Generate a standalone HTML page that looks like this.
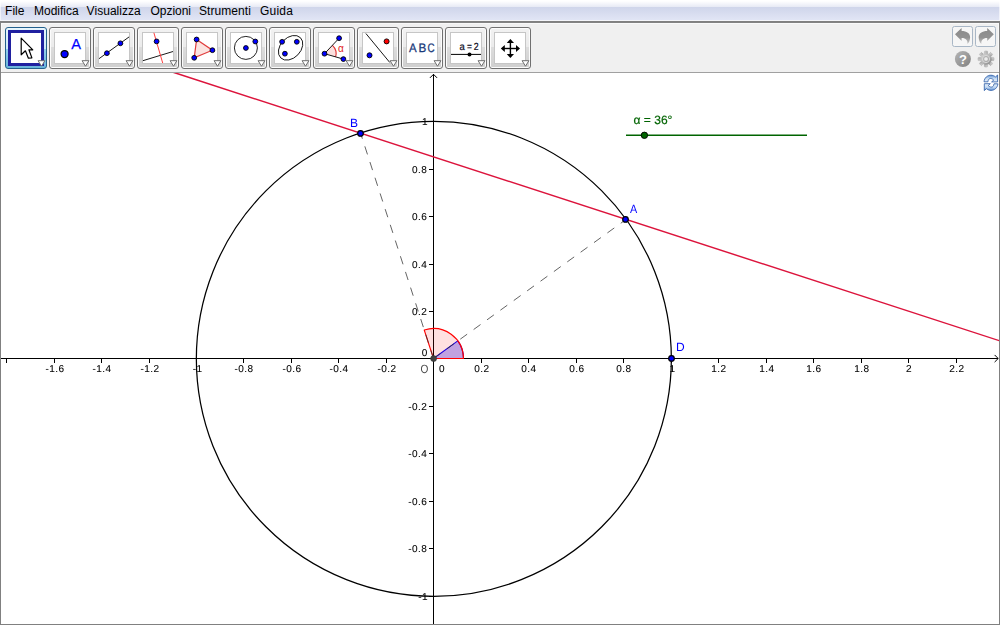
<!DOCTYPE html><html><head><meta charset="utf-8"><title>GeoGebra</title><style>
html,body{margin:0;padding:0;}
body{width:1000px;height:625px;overflow:hidden;position:relative;background:#fff;font-family:"Liberation Sans",Arial,sans-serif;}
#menubar{position:absolute;left:0;top:0;width:1000px;height:21px;
 background:linear-gradient(to bottom,#ffffff 0px,#ffffff 1px,#e7eaf5 7px,#cfd5ea 7px,#e1e5f5 20px,#f4f5fa 20px,#f4f5fa 21px);}
#menubar:before,#menubar:after{content:'';position:absolute;top:0;width:1px;height:20px;background:rgba(255,255,255,0.6);}
#menubar:before{left:0;}#menubar:after{right:0;}
#menubar span{position:absolute;top:4px;font-size:12px;line-height:15px;color:#000;white-space:nowrap;}
#toolbar{position:absolute;left:0;top:21px;width:1000px;height:52px;background:#f0f0f0;box-sizing:border-box;border-top:2px solid #838383;border-bottom:1px solid #a0a0a0;box-shadow:inset 2px 1px 0 0 #f9f9f9, inset -2px 0 0 0 #f9f9f9;}
#frame{position:absolute;left:0;top:21px;width:1000px;height:604px;box-sizing:border-box;border:1px solid #808080;pointer-events:none;}
.tb{position:absolute;top:4px;width:42px;height:42px;box-sizing:border-box;border:1px solid #707070;border-radius:3px;
 background:linear-gradient(to bottom,#f2f2f2 0,#ebebeb 19px,#dddddd 19px,#cfcfcf 40px);box-shadow:inset 0 0 0 1px #fcfcfc;}
.tb .ic{position:absolute;left:4px;top:4px;width:32px;height:32px;box-sizing:border-box;background:#fff;border:1px solid #c6c6c6;}
.tb.sel{border-color:#24608c;background:linear-gradient(to bottom,#e6f5fc 0,#cde9f7 21px,#94ceeb 21px,#68b3db 40px);box-shadow:inset 0 1px 0 0 #eaf7fd;}
.tb.sel .ic{left:2px;top:2px;width:36px;height:36px;border:3px solid #2020a0;}
.tb svg.ico{position:absolute;left:4px;top:4px;width:32px;height:32px;overflow:visible;}
.tb svg.dd{position:absolute;left:32px;top:32px;width:9px;height:7px;overflow:visible;}
.ur{position:absolute;top:3px;width:21px;height:21px;box-sizing:border-box;border:1px solid #a9b7c6;border-radius:2.5px;background:#f6f6f6;}
</style></head><body>
<div id="menubar">
<span style="left:5px;letter-spacing:0.05px">File</span>
<span style="left:34px;letter-spacing:0px">Modifica</span>
<span style="left:86.6px;letter-spacing:0.04px">Visualizza</span>
<span style="left:150.5px;letter-spacing:-0.04px">Opzioni</span>
<span style="left:199px;letter-spacing:0.07px">Strumenti</span>
<span style="left:260px;letter-spacing:0.2px">Guida</span>
</div>
<svg id="cv" width="1000" height="625" viewBox="0 0 1000 625" style="position:absolute;left:0;top:0;will-change:transform;text-rendering:geometricPrecision">
<g stroke="#000" stroke-width="1" fill="none" shape-rendering="crispEdges">
<line x1="1" y1="358.5" x2="998" y2="358.5"/>
<line x1="433.5" y1="74" x2="433.5" y2="624"/>
<line x1="6.5" y1="358.5" x2="6.5" y2="362.5"/>
<line x1="54.5" y1="358.5" x2="54.5" y2="362.5"/>
<line x1="101.5" y1="358.5" x2="101.5" y2="362.5"/>
<line x1="149.5" y1="358.5" x2="149.5" y2="362.5"/>
<line x1="196.5" y1="358.5" x2="196.5" y2="362.5"/>
<line x1="243.5" y1="358.5" x2="243.5" y2="362.5"/>
<line x1="291.5" y1="358.5" x2="291.5" y2="362.5"/>
<line x1="338.5" y1="358.5" x2="338.5" y2="362.5"/>
<line x1="386.5" y1="358.5" x2="386.5" y2="362.5"/>
<line x1="481.5" y1="358.5" x2="481.5" y2="362.5"/>
<line x1="528.5" y1="358.5" x2="528.5" y2="362.5"/>
<line x1="576.5" y1="358.5" x2="576.5" y2="362.5"/>
<line x1="623.5" y1="358.5" x2="623.5" y2="362.5"/>
<line x1="671.5" y1="358.5" x2="671.5" y2="362.5"/>
<line x1="718.5" y1="358.5" x2="718.5" y2="362.5"/>
<line x1="766.5" y1="358.5" x2="766.5" y2="362.5"/>
<line x1="813.5" y1="358.5" x2="813.5" y2="362.5"/>
<line x1="861.5" y1="358.5" x2="861.5" y2="362.5"/>
<line x1="908.5" y1="358.5" x2="908.5" y2="362.5"/>
<line x1="956.5" y1="358.5" x2="956.5" y2="362.5"/>
<line x1="429.0" y1="121.5" x2="433.5" y2="121.5"/>
<line x1="429.0" y1="169.5" x2="433.5" y2="169.5"/>
<line x1="429.0" y1="216.5" x2="433.5" y2="216.5"/>
<line x1="429.0" y1="264.5" x2="433.5" y2="264.5"/>
<line x1="429.0" y1="311.5" x2="433.5" y2="311.5"/>
<line x1="429.0" y1="406.5" x2="433.5" y2="406.5"/>
<line x1="429.0" y1="453.5" x2="433.5" y2="453.5"/>
<line x1="429.0" y1="501.5" x2="433.5" y2="501.5"/>
<line x1="429.0" y1="548.5" x2="433.5" y2="548.5"/>
<line x1="429.0" y1="596.5" x2="433.5" y2="596.5"/>
</g>
<g stroke="#000" stroke-width="1" fill="none" stroke-linecap="round">
<polyline points="430.2,77.6 433.5,74.3 436.8,77.6"/>
<polyline points="994.9,355.2 998.2,358.5 994.9,361.8"/>
</g>
<g font-family="Liberation Sans, Arial, sans-serif" font-size="10px" fill="#000" stroke="#000" stroke-width="0.1" letter-spacing="0.45">
<text x="54.9" y="371.9" text-anchor="middle">-1.6</text>
<text x="101.9" y="371.9" text-anchor="middle">-1.4</text>
<text x="149.9" y="371.9" text-anchor="middle">-1.2</text>
<text x="197.6" y="371.9" text-anchor="middle">-1</text>
<text x="243.9" y="371.9" text-anchor="middle">-0.8</text>
<text x="291.9" y="371.9" text-anchor="middle">-0.6</text>
<text x="338.9" y="371.9" text-anchor="middle">-0.4</text>
<text x="386.9" y="371.9" text-anchor="middle">-0.2</text>
<text x="481.9" y="371.9" text-anchor="middle">0.2</text>
<text x="528.9" y="371.9" text-anchor="middle">0.4</text>
<text x="576.9" y="371.9" text-anchor="middle">0.6</text>
<text x="623.9" y="371.9" text-anchor="middle">0.8</text>
<text x="672.6" y="371.9" text-anchor="middle">1</text>
<text x="718.9" y="371.9" text-anchor="middle">1.2</text>
<text x="766.9" y="371.9" text-anchor="middle">1.4</text>
<text x="813.9" y="371.9" text-anchor="middle">1.6</text>
<text x="861.9" y="371.9" text-anchor="middle">1.8</text>
<text x="908.9" y="371.9" text-anchor="middle">2</text>
<text x="956.9" y="371.9" text-anchor="middle">2.2</text>
<text x="428.0" y="125.0" text-anchor="end">1</text>
<text x="427.2" y="173.1" text-anchor="end">0.8</text>
<text x="427.2" y="220.1" text-anchor="end">0.6</text>
<text x="427.2" y="268.1" text-anchor="end">0.4</text>
<text x="427.2" y="315.1" text-anchor="end">0.2</text>
<text x="427.2" y="410.1" text-anchor="end">-0.2</text>
<text x="427.2" y="457.1" text-anchor="end">-0.4</text>
<text x="427.2" y="505.1" text-anchor="end">-0.6</text>
<text x="427.2" y="552.0" text-anchor="end">-0.8</text>
<text x="428.0" y="600.0" text-anchor="end">-1</text>
<text x="439.0" y="371.9">0</text>
<text x="421.8" y="355.9">0</text>
</g>
<text transform="translate(420.6,372.9) scale(0.84,1)" font-family="Liberation Sans, Arial, sans-serif" font-size="12px" fill="#484848">O</text>
<circle cx="433.85" cy="358.85" r="237.50" fill="none" stroke="#000" stroke-width="1.25"/>
<path d="M433.5,358.5 L463.5,358.5 A30,30 0 0 0 457.77,340.87 Z" fill="rgba(0,0,255,0.28)" stroke="#0000ff" stroke-width="1.1" stroke-linejoin="round"/>
<path d="M433.5,358.5 L463.5,358.5 A30,30 0 0 0 424.23,329.97 Z" fill="rgba(255,0,0,0.12)" stroke="#ff0000" stroke-width="1.1" stroke-linejoin="round"/>
<g stroke="#303030" stroke-width="0.75" stroke-dasharray="8.5 8" fill="none">
<line x1="433.5" y1="358.5" x2="626.1" y2="219.4"/>
<line x1="433.5" y1="358.5" x2="360.6" y2="133.2"/>
</g>
<line x1="166.2" y1="70" x2="1000" y2="340.9" stroke="#dc143c" stroke-width="1.45"/>
<circle cx="433.6" cy="358.6" r="3" fill="#404040" stroke="#303030" stroke-width="0.6"/>
<circle cx="625.5" cy="219.4" r="2.8" fill="#0000ff" stroke="#000" stroke-width="1.2"/>
<circle cx="360.5" cy="133.4" r="2.8" fill="#0000ff" stroke="#000" stroke-width="1.2"/>
<circle cx="671.5" cy="358.4" r="2.8" fill="#0000ff" stroke="#000" stroke-width="1.2"/>
<g font-family="Liberation Sans, Arial, sans-serif" font-size="12px" fill="#0000ff">
<text transform="translate(630,212.9) scale(0.9,1)">A</text>
<text x="350" y="127.2">B</text>
<text x="676.1" y="350.5">D</text>
</g>
<line x1="626" y1="135.3" x2="807" y2="135.3" stroke="#006400" stroke-width="1.6"/>
<circle cx="644.4" cy="135.3" r="3.2" fill="#006400" stroke="#000" stroke-width="0.9"/>
<text x="633.6" y="124" font-family="Liberation Sans, Arial, sans-serif" font-size="12px" fill="#006400" stroke="#006400" stroke-width="0.2">α = 36°</text>
</svg>
<div id="toolbar">
<div class="tb sel" style="left:5px"><div class="ic"></div><svg class="ico" viewBox="0 0 32 32"><path d="M11.2,6.2 L11.2,22.8 L15.4,18.8 L18.4,26.2 L21.9,25.9 L18.9,17.8 L22.8,17.8 Z" fill="#fff" stroke="#000" stroke-width="1.2" stroke-linejoin="round"/></svg><svg class="dd" viewBox="0 0 9 7"><path d="M0.1,0.7 L6.9,0.7 L3.5,6.2 Z" fill="#fff" stroke="#6e6e6e" stroke-width="1" stroke-linejoin="miter"/></svg></div>
<div class="tb" style="left:49px"><div class="ic"></div><svg class="ico" viewBox="0 0 32 32"><circle cx="10.6" cy="22.0" r="3.5" fill="#0000ff" stroke="#000" stroke-width="1.25"/><text x="17.3" y="16.6" font-family="Liberation Sans, Arial, sans-serif" font-size="14.6px" fill="#0000ff" stroke="#0000ff" stroke-width="0.25">A</text></svg><svg class="dd" viewBox="0 0 9 7"><path d="M0.1,0.7 L6.9,0.7 L3.5,6.2 Z" fill="#fff" stroke="#6e6e6e" stroke-width="1" stroke-linejoin="miter"/></svg></div>
<div class="tb" style="left:93px"><div class="ic"></div><svg class="ico" viewBox="0 0 32 32"><line x1="1.0" y1="26.7" x2="31.1" y2="4.9" stroke="#000" stroke-width="0.9"/><circle cx="8.9" cy="21.2" r="2.4" fill="#0000ff" stroke="#000" stroke-width="0.9"/><circle cx="22.4" cy="11.3" r="2.4" fill="#0000ff" stroke="#000" stroke-width="0.9"/></svg><svg class="dd" viewBox="0 0 9 7"><path d="M0.1,0.7 L6.9,0.7 L3.5,6.2 Z" fill="#fff" stroke="#6e6e6e" stroke-width="1" stroke-linejoin="miter"/></svg></div>
<div class="tb" style="left:137px"><div class="ic"></div><svg class="ico" viewBox="0 0 32 32"><line x1="0.9" y1="28.7" x2="31.0" y2="19.5" stroke="#000" stroke-width="0.9"/><line x1="11.9" y1="0.8" x2="20.7" y2="31.0" stroke="#ff2828" stroke-width="0.9"/><circle cx="14.6" cy="9.4" r="2.4" fill="#0000ff" stroke="#000" stroke-width="0.9"/></svg><svg class="dd" viewBox="0 0 9 7"><path d="M0.1,0.7 L6.9,0.7 L3.5,6.2 Z" fill="#fff" stroke="#6e6e6e" stroke-width="1" stroke-linejoin="miter"/></svg></div>
<div class="tb" style="left:181px"><div class="ic"></div><svg class="ico" viewBox="0 0 32 32"><polygon points="10.6,7.5 26.4,18.2 8.2,25.8" fill="#fbe3e0" stroke="#e03c3c" stroke-width="1.2"/><circle cx="10.6" cy="7.5" r="2.4" fill="#0000ff" stroke="#000" stroke-width="0.9"/><circle cx="26.4" cy="18.2" r="2.4" fill="#0000ff" stroke="#000" stroke-width="0.9"/><circle cx="8.2" cy="25.8" r="2.4" fill="#0000ff" stroke="#000" stroke-width="0.9"/></svg><svg class="dd" viewBox="0 0 9 7"><path d="M0.1,0.7 L6.9,0.7 L3.5,6.2 Z" fill="#fff" stroke="#6e6e6e" stroke-width="1" stroke-linejoin="miter"/></svg></div>
<div class="tb" style="left:225px"><div class="ic"></div><svg class="ico" viewBox="0 0 32 32"><circle cx="15.9" cy="15.9" r="11.5" fill="none" stroke="#000" stroke-width="0.85"/><circle cx="15.9" cy="16.0" r="2.4" fill="#0000ff" stroke="#000" stroke-width="0.9"/><circle cx="25.3" cy="9.5" r="2.4" fill="#0000ff" stroke="#000" stroke-width="0.9"/></svg><svg class="dd" viewBox="0 0 9 7"><path d="M0.1,0.7 L6.9,0.7 L3.5,6.2 Z" fill="#fff" stroke="#6e6e6e" stroke-width="1" stroke-linejoin="miter"/></svg></div>
<div class="tb" style="left:269px"><div class="ic"></div><svg class="ico" viewBox="0 0 32 32"><ellipse cx="16.6" cy="15.8" rx="14.1" ry="10.1" transform="rotate(-46 16.6 15.8)" fill="none" stroke="#000" stroke-width="0.85"/><circle cx="8.1" cy="9.8" r="2.4" fill="#0000ff" stroke="#000" stroke-width="0.9"/><circle cx="22.8" cy="9.8" r="2.4" fill="#0000ff" stroke="#000" stroke-width="0.9"/><circle cx="10.9" cy="21.7" r="2.4" fill="#0000ff" stroke="#000" stroke-width="0.9"/></svg><svg class="dd" viewBox="0 0 9 7"><path d="M0.1,0.7 L6.9,0.7 L3.5,6.2 Z" fill="#fff" stroke="#6e6e6e" stroke-width="1" stroke-linejoin="miter"/></svg></div>
<div class="tb" style="left:313px"><div class="ic"></div><svg class="ico" viewBox="0 0 32 32"><path d="M6.5,21.7 L14.4,13.3 A11.5,11.5 0 0 1 17.6,24.9 Z" fill="#fbe0de" stroke="none"/><path d="M14.4,13.3 A11.5,11.5 0 0 1 17.6,24.9" fill="none" stroke="#e03030" stroke-width="1.1"/><line x1="6.5" y1="21.7" x2="21.1" y2="6.2" stroke="#000" stroke-width="0.9"/><line x1="6.5" y1="21.7" x2="25.4" y2="27.1" stroke="#000" stroke-width="0.9"/><circle cx="6.5" cy="21.7" r="2.4" fill="#0000ff" stroke="#000" stroke-width="0.9"/><circle cx="21.1" cy="6.2" r="2.4" fill="#0000ff" stroke="#000" stroke-width="0.9"/><circle cx="25.4" cy="27.1" r="2.4" fill="#0000ff" stroke="#000" stroke-width="0.9"/><text x="20.0" y="19.5" font-family="Liberation Sans, Arial, sans-serif" font-size="10px" fill="#e02020">α</text></svg><svg class="dd" viewBox="0 0 9 7"><path d="M0.1,0.7 L6.9,0.7 L3.5,6.2 Z" fill="#fff" stroke="#6e6e6e" stroke-width="1" stroke-linejoin="miter"/></svg></div>
<div class="tb" style="left:357px"><div class="ic"></div><svg class="ico" viewBox="0 0 32 32"><line x1="3.9" y1="1.5" x2="27.8" y2="30.5" stroke="#000" stroke-width="0.9"/><circle cx="24.6" cy="9.4" r="2.5" fill="#ff0000" stroke="#000" stroke-width="0.9"/><circle cx="7.5" cy="23.3" r="2.5" fill="#0000ff" stroke="#000" stroke-width="0.9"/></svg><svg class="dd" viewBox="0 0 9 7"><path d="M0.1,0.7 L6.9,0.7 L3.5,6.2 Z" fill="#fff" stroke="#6e6e6e" stroke-width="1" stroke-linejoin="miter"/></svg></div>
<div class="tb" style="left:401px"><div class="ic"></div><svg class="ico" viewBox="0 0 32 32"><g style="text-rendering:geometricPrecision"><text transform="translate(3.00,20.10) scale(0.93,1)" font-family="Liberation Sans, Arial, sans-serif" font-size="12.3px" fill="#1a3a7a" stroke="#1a3a7a" stroke-width="0.3">A</text><text transform="translate(12.50,20.10) scale(0.95,1)" font-family="Liberation Sans, Arial, sans-serif" font-size="12.3px" fill="#1a3a7a" stroke="#1a3a7a" stroke-width="0.3">B</text><text transform="translate(21.45,20.10) scale(0.8,1)" font-family="Liberation Sans, Arial, sans-serif" font-size="12.3px" fill="#1a3a7a" stroke="#1a3a7a" stroke-width="0.3">C</text></g></svg><svg class="dd" viewBox="0 0 9 7"><path d="M0.1,0.7 L6.9,0.7 L3.5,6.2 Z" fill="#fff" stroke="#6e6e6e" stroke-width="1" stroke-linejoin="miter"/></svg></div>
<div class="tb" style="left:445px"><div class="ic"></div><svg class="ico" viewBox="0 0 32 32"><g style="text-rendering:geometricPrecision"><text transform="translate(9.50,17.90) scale(0.92,1)" font-family="Liberation Sans, Arial, sans-serif" font-size="10.3px" fill="#0a0a20" stroke="#0a0a20" stroke-width="0.2">a</text><text transform="translate(16.90,17.70) scale(0.82,1)" font-family="Liberation Sans, Arial, sans-serif" font-size="10.3px" fill="#0a0a20" stroke="#0a0a20" stroke-width="0.2">=</text><text transform="translate(23.75,17.90) scale(0.86,1)" font-family="Liberation Sans, Arial, sans-serif" font-size="10.3px" fill="#0a0a20" stroke="#0a0a20" stroke-width="0.2">2</text></g><line x1="1.0" y1="22.4" x2="31.0" y2="22.4" stroke="#000" stroke-width="1"/><circle cx="19.5" cy="22.4" r="2" fill="#000"/></svg><svg class="dd" viewBox="0 0 9 7"><path d="M0.1,0.7 L6.9,0.7 L3.5,6.2 Z" fill="#fff" stroke="#6e6e6e" stroke-width="1" stroke-linejoin="miter"/></svg></div>
<div class="tb" style="left:489px"><div class="ic"></div><svg class="ico" viewBox="0 0 32 32"><g fill="#000" stroke="none"><rect x="15.70" y="9.50" width="1.4" height="14"/><rect x="9.40" y="15.80" width="14" height="1.4"/><polygon points="16.40,6.90 12.80,10.90 20.00,10.90"/><polygon points="16.40,26.10 12.80,22.10 20.00,22.10"/><polygon points="6.80,16.50 10.80,12.90 10.80,20.10"/><polygon points="26.00,16.50 22.00,12.90 22.00,20.10"/></g></svg><svg class="dd" viewBox="0 0 9 7"><path d="M0.1,0.7 L6.9,0.7 L3.5,6.2 Z" fill="#fff" stroke="#6e6e6e" stroke-width="1" stroke-linejoin="miter"/></svg></div>
<div class="ur" style="left:952px"><svg viewBox="0 0 19 19" width="19" height="19" style="position:absolute;left:0;top:0"><defs><linearGradient id="ug" x1="0" y1="0" x2="0" y2="1"><stop offset="0" stop-color="#8a8a8a"/><stop offset="0.6" stop-color="#929292"/><stop offset="1" stop-color="#c8c8c8"/></linearGradient></defs><path d="M2,7.3 L8.6,0.9 L8.6,4 C13.5,4 17.3,6.2 17.1,10.5 C17,13 16.2,15.6 14.4,16.9 C14.9,13.4 13,10.9 8.6,10.9 L8.6,14.1 Z" fill="url(#ug)"/></svg></div>
<div class="ur" style="left:975px"><svg viewBox="0 0 19 19" width="19" height="19" style="position:absolute;left:0;top:0"><g transform="translate(19.8,0) scale(-1,1)"><path d="M2,7.3 L8.6,0.9 L8.6,4 C13.5,4 17.3,6.2 17.1,10.5 C17,13 16.2,15.6 14.4,16.9 C14.9,13.4 13,10.9 8.6,10.9 L8.6,14.1 Z" fill="url(#ug)"/></g></svg></div>
<svg width="18" height="18" viewBox="0 0 18 18" style="position:absolute;left:954px;top:27px"><defs><linearGradient id="hg" x1="0" y1="0" x2="1" y2="1"><stop offset="0" stop-color="#b6b6b6"/><stop offset="1" stop-color="#808080"/></linearGradient></defs><circle cx="8.9" cy="9" r="8" fill="url(#hg)"/><text x="8.9" y="13.6" text-anchor="middle" font-family="Liberation Sans, Arial, sans-serif" font-weight="bold" font-size="13px" fill="#fff">?</text></svg>
<svg width="20" height="20" viewBox="-10 -10 20 20" style="position:absolute;left:975.9px;top:26.2px"><defs><linearGradient id="gg" x1="0" y1="0" x2="1" y2="1"><stop offset="0" stop-color="#d6d6d6"/><stop offset="0.5" stop-color="#b8b8b8"/><stop offset="1" stop-color="#808080"/></linearGradient></defs><g fill="url(#gg)" stroke="#a0a0a0" stroke-width="0.4"><rect x="-1.6" y="-8" width="3.2" height="4" rx="0.7" transform="rotate(0)"/><rect x="-1.6" y="-8" width="3.2" height="4" rx="0.7" transform="rotate(45)"/><rect x="-1.6" y="-8" width="3.2" height="4" rx="0.7" transform="rotate(90)"/><rect x="-1.6" y="-8" width="3.2" height="4" rx="0.7" transform="rotate(135)"/><rect x="-1.6" y="-8" width="3.2" height="4" rx="0.7" transform="rotate(180)"/><rect x="-1.6" y="-8" width="3.2" height="4" rx="0.7" transform="rotate(225)"/><rect x="-1.6" y="-8" width="3.2" height="4" rx="0.7" transform="rotate(270)"/><rect x="-1.6" y="-8" width="3.2" height="4" rx="0.7" transform="rotate(315)"/></g><circle r="5.7" fill="url(#gg)"/><circle r="3.6" fill="none" stroke="#d8d8d8" stroke-width="1"/><circle r="2.3" fill="#ececec" stroke="#9c9c9c" stroke-width="0.6"/></svg>
</div>
<svg width="1000" height="30" viewBox="0 70 1000 30" style="position:absolute;left:0;top:70px;pointer-events:none"><defs><linearGradient id="rg" x1="0" y1="0" x2="0" y2="1"><stop offset="0" stop-color="#5a8cd0"/><stop offset="0.5" stop-color="#c4daf2"/><stop offset="1" stop-color="#e6f0fa"/></linearGradient></defs><path d="M984.0,81.8 C984.4,77.6 987.6,75.2 990.8,75.2 C992.6,75.2 994.2,75.8 995.5,76.9 L997.6,75.0 L997.6,81.9 L991.6,81.9 L993.7,80.1 C992.6,78.9 991.5,78.5 990.5,78.5 C989.1,78.5 988.2,79.6 987.9,81.8 Z" fill="url(#rg)" stroke="#2a5aa6" stroke-width="0.8" stroke-linejoin="round"/><path d="M984.0,81.8 C984.4,77.6 987.6,75.2 990.8,75.2 C992.6,75.2 994.2,75.8 995.5,76.9 L997.6,75.0 L997.6,81.9 L991.6,81.9 L993.7,80.1 C992.6,78.9 991.5,78.5 990.5,78.5 C989.1,78.5 988.2,79.6 987.9,81.8 Z" fill="url(#rg)" stroke="#2a5aa6" stroke-width="0.8" stroke-linejoin="round" transform="rotate(180 990.95 82.8)"/></svg>
<div id="frame"></div>
</body></html>
